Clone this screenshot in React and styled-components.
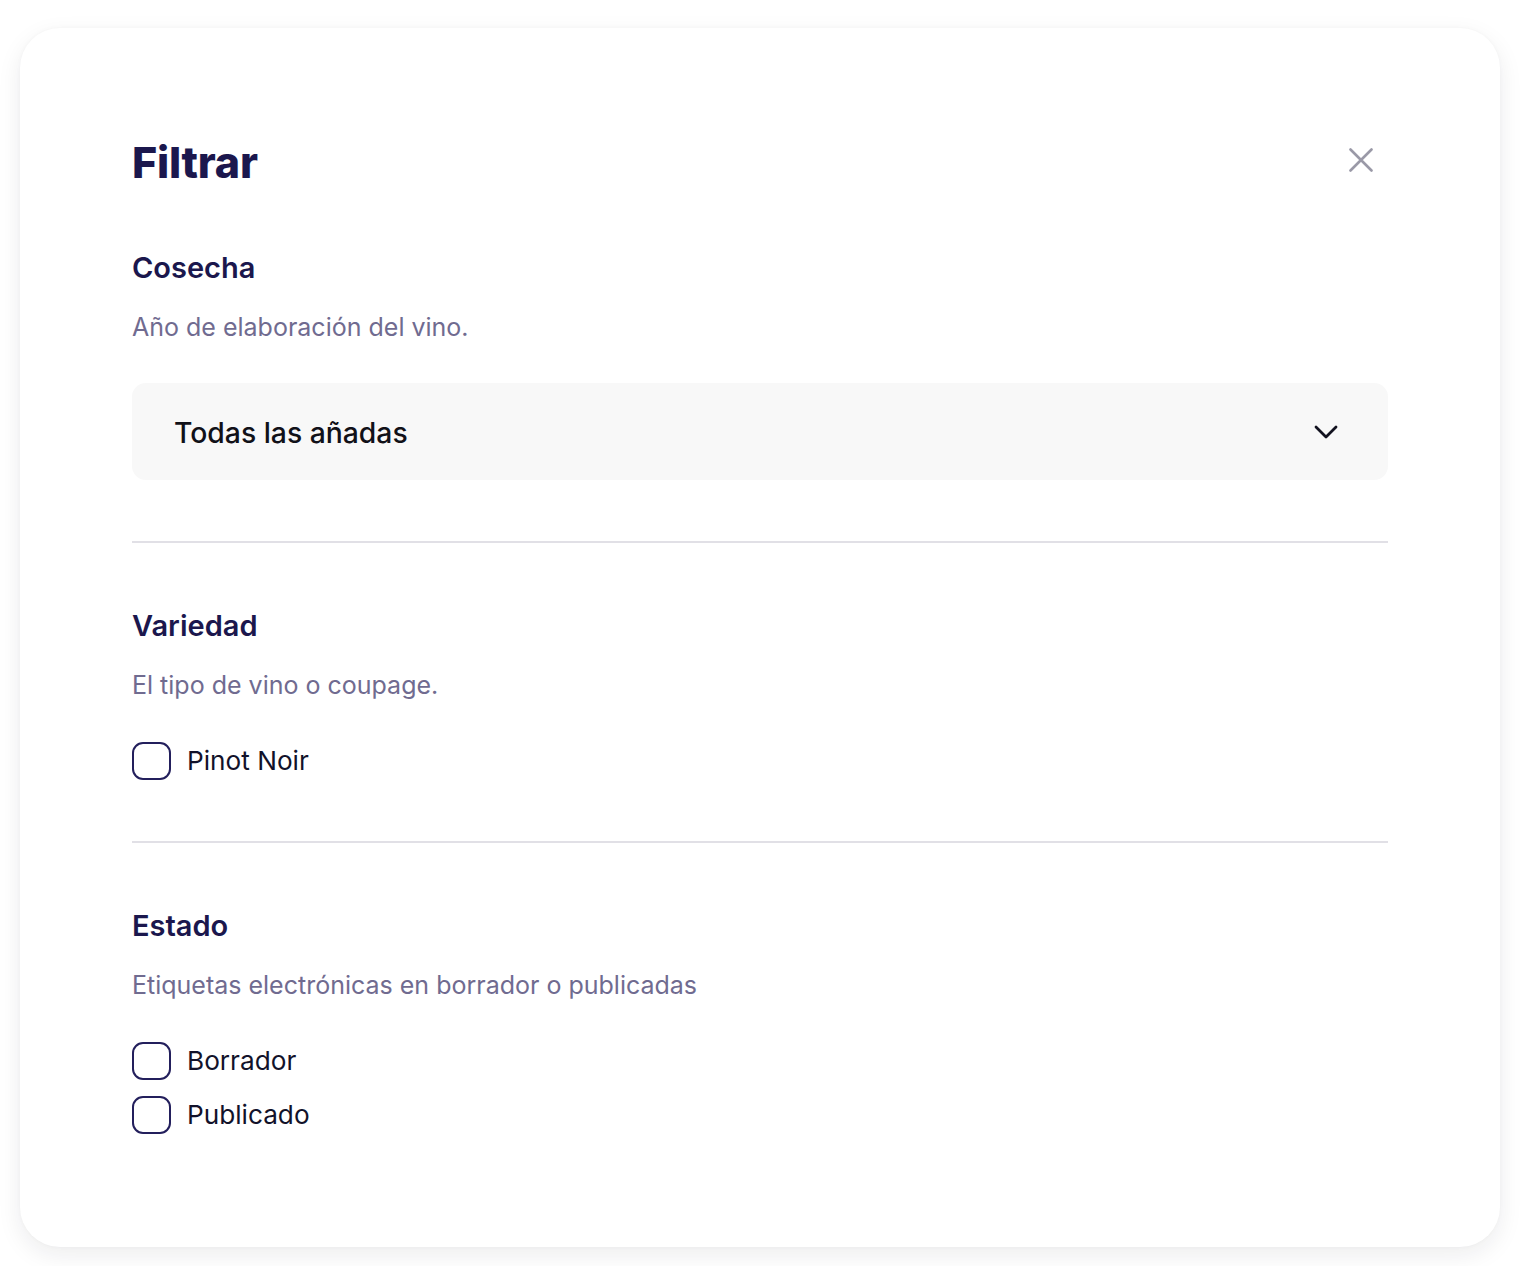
import React from "react";
import styled, { createGlobalStyle } from "styled-components";

const Global = createGlobalStyle`
  html, body { margin: 0; padding: 0; background: #ffffff; }
  body { font-family: Inter, "Noto Sans", sans-serif; -webkit-font-smoothing: antialiased; }
  * { box-sizing: border-box; }
`;

const Page = styled.div`
  padding: 28px 20px 19px;
`;

const Card = styled.div`
  background: #ffffff;
  border-radius: 40px;
  box-shadow: 0 8px 24px rgba(20, 20, 40, 0.08), 0 0 4px rgba(20, 20, 40, 0.03);
  padding: 108px 112px 113px;
  display: flex;
  flex-direction: column;
`;

const Header = styled.div`
  display: flex;
  align-items: center;
  justify-content: space-between;
  margin-bottom: 61px;
`;

const Title = styled.h1`
  margin: 0;
  font-size: 43px;
  line-height: 53px;
  font-weight: 800;
  color: #1b174d;
  letter-spacing: -0.2px;
`;

const CloseButton = styled.button`
  border: 0;
  background: none;
  padding: 0;
  margin: 0 15px 6px 0;
  width: 24px;
  height: 24px;
  display: flex;
  align-items: center;
  justify-content: center;
  color: #9a99a7;
  cursor: pointer;
`;

const Section = styled.section`
  display: flex;
  flex-direction: column;
`;

const SectionTitle = styled.h2`
  margin: 0;
  font-size: 29px;
  line-height: 36px;
  font-weight: 600;
  color: #1b174d;
`;

const SectionHint = styled.p`
  margin: 25px 0 0;
  font-size: 25px;
  line-height: 32px;
  font-weight: 400;
  color: #706b90;
`;

const Select = styled.div`
  margin-top: 40px;
  height: 97px;
  background: #f8f8f8;
  border-radius: 14px;
  display: flex;
  align-items: center;
  justify-content: space-between;
  padding: 2px 50px 0 42px;
  font-size: 28.3px;
  font-weight: 500;
  color: #111118;
`;

const Divider = styled.hr`
  border: 0;
  height: 2px;
  background: #e1e0e6;
  margin: ${(p) => p.$top}px 0 65px;
`;

const Options = styled.div`
  margin-top: 41px;
  display: flex;
  flex-direction: column;
  gap: 16px;
`;

const Option = styled.label`
  display: flex;
  align-items: center;
  gap: 16px;
  font-size: 26.2px;
  line-height: 38px;
  color: #12122a;
  cursor: pointer;
`;

const Box = styled.span`
  width: 39px;
  height: 38px;
  border: 2px solid #231f5c;
  border-radius: 11px;
  flex-shrink: 0;
`;

const CloseIcon = () => (
  <svg width="24" height="24" viewBox="0 0 24 24" fill="none">
    <path d="M1.5 1.5L22.5 22.5M22.5 1.5L1.5 22.5" stroke="currentColor" strokeWidth="2.6" strokeLinecap="round" />
  </svg>
);

const Chevron = () => (
  <svg width="24" height="15" viewBox="0 0 24 15" fill="none">
    <polyline points="2,2 12,12 22,2" stroke="#12121f" strokeWidth="2.8" strokeLinecap="round" strokeLinejoin="round" />
  </svg>
);

const CheckOption = ({ label }) => (
  <Option>
    <Box />
    {label}
  </Option>
);

export default function App() {
  return (
    <>
      <Global />
      <Page>
        <Card>
          <Header>
            <Title>Filtrar</Title>
            <CloseButton aria-label="Cerrar">
              <CloseIcon />
            </CloseButton>
          </Header>

          <Section>
            <SectionTitle>Cosecha</SectionTitle>
            <SectionHint>Año de elaboración del vino.</SectionHint>
            <Select>
              <span>Todas las añadas</span>
              <Chevron />
            </Select>
          </Section>

          <Divider $top={61} />

          <Section>
            <SectionTitle>Variedad</SectionTitle>
            <SectionHint>El tipo de vino o coupage.</SectionHint>
            <Options>
              <CheckOption label="Pinot Noir" />
            </Options>
          </Section>

          <Divider $top={61} />

          <Section>
            <SectionTitle>Estado</SectionTitle>
            <SectionHint>Etiquetas electrónicas en borrador o publicadas</SectionHint>
            <Options>
              <CheckOption label="Borrador" />
              <CheckOption label="Publicado" />
            </Options>
          </Section>
        </Card>
      </Page>
    </>
  );
}
